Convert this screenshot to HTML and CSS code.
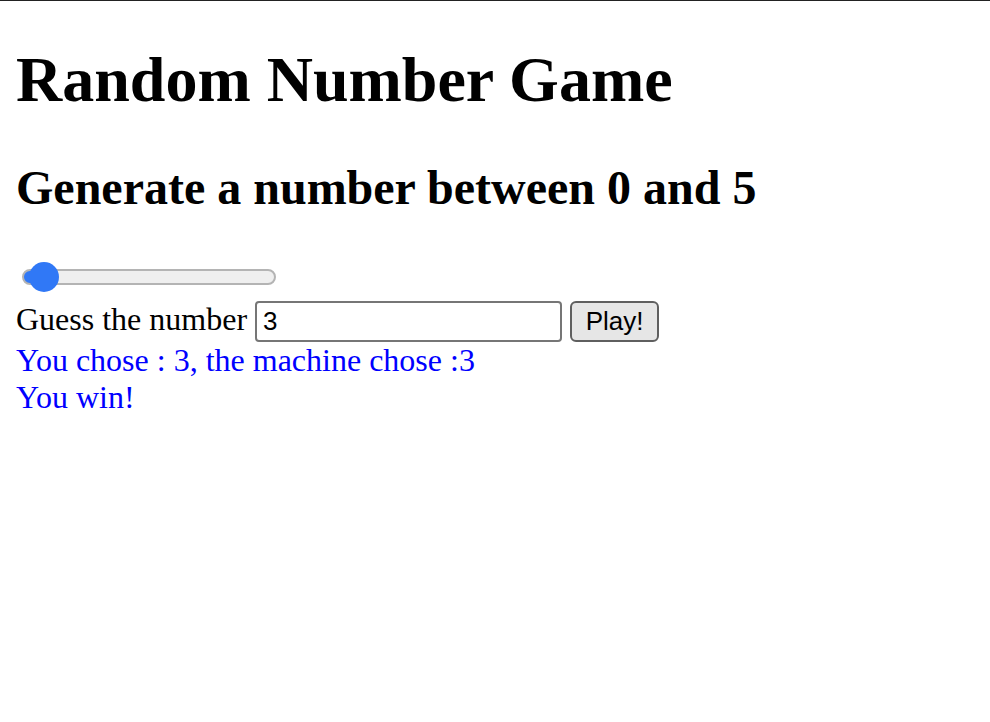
FILE: index.html
```html
<!DOCTYPE html>
<html lang="en">
<head>
<meta charset="utf-8">
<title>Random Number Game</title>
<link rel="stylesheet" href="styles.css">
</head>
<body>
<h1 class="title">Random Number Game</h1>
<h2 class="subtitle">Generate a number between 0 and 5</h2>
<div class="slider-row">
  <input class="slider" type="range" min="0" max="5" value="0">
</div>
<div class="guess-row">Guess the number <input class="guess-input" type="text" value="3"> <button class="play-btn" type="button">Play!</button></div>
<div class="result">You chose : 3, the machine chose :3</div>
<div class="result">You win!</div>
</body>
</html>
```
FILE: styles.css
```css
html {
  border-top: 1px solid #222;
  background: #fff;
}
body {
  margin: 0 16px 16px;
  font-family: "Liberation Serif", "Times New Roman", serif;
  font-size: 32px;
  color: #000;
}
.title {
  font-size: 64px;
  font-weight: bold;
  margin: 42px 0 43px;
}
.subtitle {
  font-size: 48px;
  font-weight: bold;
  margin: 40px 0;
}
.slider-row {
  height: 44px;
  display: flex;
  align-items: center;
  padding-left: 6px;
}
.slider {
  -webkit-appearance: none;
  appearance: none;
  width: 254px;
  height: 30px;
  margin: 0;
  background: transparent;
}
.slider::-webkit-slider-runnable-track {
  height: 16px;
  box-sizing: border-box;
  border: 2px solid #b4b4b4;
  border-radius: 8px;
  background: linear-gradient(to right, #3078f6 0 22px, #efefef 22px);
}
.slider::-webkit-slider-thumb {
  -webkit-appearance: none;
  appearance: none;
  width: 30px;
  height: 30px;
  border-radius: 50%;
  background: #3078f6;
  margin-top: -9px;
  transform: translateX(5px);
}
.guess-row {
  line-height: 37px;
  margin-top: 2px;
}
.guess-input {
  font-family: "Liberation Sans", Arial, sans-serif;
  font-size: 26px;
  width: 307px;
  height: 41px;
  box-sizing: border-box;
  border: 2px solid #767676;
  border-radius: 4px;
  padding: 2px 6px;
  margin: 0;
  color: #000;
  vertical-align: baseline;
}
.play-btn {
  font-family: "Liberation Sans", Arial, sans-serif;
  font-size: 26px;
  width: 89px;
  height: 41px;
  box-sizing: border-box;
  padding: 0;
  border: 2px solid #5f5f5f;
  border-radius: 6px;
  background: #e6e6e6;
  color: #000;
  margin: 0;
}
.result {
  color: #0000ff;
  line-height: 37px;
}
```
